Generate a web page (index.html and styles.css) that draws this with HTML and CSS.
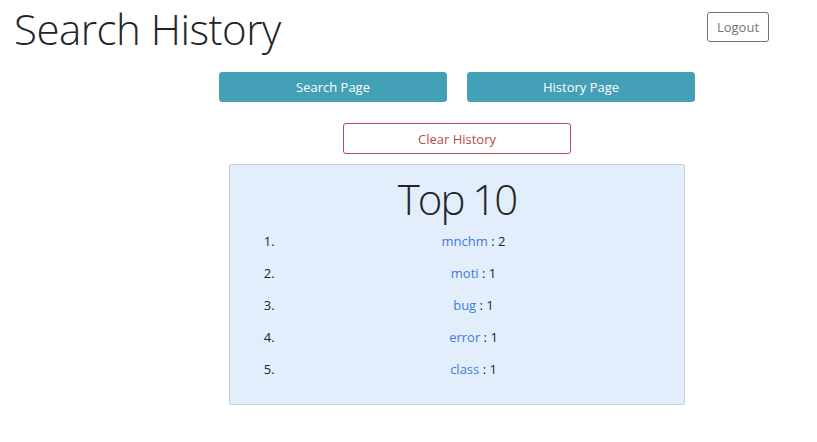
FILE: index.html
```html
<!DOCTYPE html>
<html>
<head>
<meta charset="utf-8">
<link rel="stylesheet" href="styles.css">
</head>
<body>
<header class="header">
  <h1 class="title">Search History</h1>
  <button class="btn btn-logout">Logout</button>
</header>
<main class="main">
  <nav class="nav">
    <button class="btn btn-info">Search Page</button>
    <button class="btn btn-info">History Page</button>
  </nav>
  <div class="clear-row">
    <button class="btn btn-clear">Clear History</button>
  </div>
  <section class="box">
    <h2 class="box-title">Top 10</h2>
    <ol class="list">
      <li><a href="#" class="term">mnchm</a> : 2</li>
      <li><a href="#" class="term">moti</a> : 1</li>
      <li><a href="#" class="term">bug</a> : 1</li>
      <li><a href="#" class="term">error</a> : 1</li>
      <li><a href="#" class="term">class</a> : 1</li>
    </ol>
  </section>
</main>
</body>
</html>
```
FILE: styles.css
```css
* { box-sizing: border-box; }
body {
  margin: 0;
  font-family: "Open Sans", "Noto Sans", sans-serif;
  color: #212529;
  background: #fff;
}
.header {
  display: flex;
  justify-content: space-between;
  align-items: flex-start;
  padding: 0 48px 0 14px;
  height: 72px;
}
.title {
  margin: 1px 0 0;
  font-size: 42px;
  font-weight: 300;
  line-height: 56px;
  letter-spacing: -0.5px;
  color: #212529;
}
.btn {
  font-family: "Open Sans", "Noto Sans", sans-serif;
  font-size: 13px;
  border-radius: 3px;
  cursor: pointer;
}
.btn-logout {
  margin-top: 12px;
  width: 62px;
  height: 30px;
  padding: 0;
  background: #fff;
  border: 1px solid #6c757d;
  color: #6c757d;
}
.main {
  width: 476px;
  margin-left: 219px;
}
.nav {
  display: flex;
  gap: 20px;
}
.btn-info {
  flex: 1;
  height: 30px;
  background: #43a0b7;
  border: 1px solid #43a0b7;
  color: #fff;
}
.clear-row {
  display: flex;
  justify-content: center;
  margin-top: 21px;
}
.btn-clear {
  width: 228px;
  height: 31px;
  background: #fff;
  border: 1px solid #b8494f;
  color: #b8494f;
}
.box {
  margin: 10px 10px 0;
  height: 241px;
  background: #e3eefc;
  border: 1px solid #c6d0dc;
  border-radius: 2px;
}
.box-title {
  margin: 5px 0 0;
  text-align: center;
  font-size: 42px;
  font-weight: 300;
  line-height: 58px;
  letter-spacing: -2px;
}
.list {
  margin: 3px 0 0;
  padding: 0 21px 0 48px;
  font-size: 13px;
}
.list li {
  height: 32px;
  line-height: 20px;
  padding-left: 6px;
  text-align: center;
}
.list li::marker {
  color: #212529;
}
.term {
  color: #3b7ddd;
  text-decoration: none;
}
```
